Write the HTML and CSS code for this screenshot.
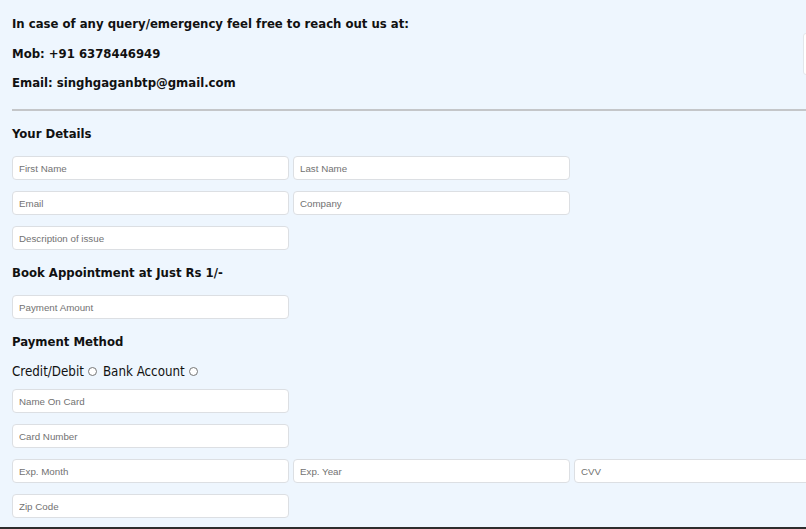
FILE: index.html
```html
<!DOCTYPE html>
<html lang="en">
<head>
<meta charset="utf-8">
<title>Contact &amp; Appointment</title>
<link rel="stylesheet" href="styles.css">
</head>
<body>
<div class="page">
  <header class="contact">
    <div class="contact-info">
      <p class="line">In case of any query/emergency feel free to reach out us at:</p>
      <p class="line">Mob: +91 6378446949</p>
      <p class="line">Email: singhgaganbtp@gmail.com</p>
    </div>
    <div class="side-box"></div>
  </header>
  <hr class="divider">
  <form class="form">
    <h3 class="heading">Your Details</h3>
    <div class="row">
      <input class="field" type="text" placeholder="First Name">
      <input class="field" type="text" placeholder="Last Name">
    </div>
    <div class="row">
      <input class="field" type="text" placeholder="Email">
      <input class="field" type="text" placeholder="Company">
    </div>
    <div class="row">
      <input class="field" type="text" placeholder="Description of issue">
    </div>
    <h3 class="heading">Book Appointment at Just Rs 1/-</h3>
    <div class="row">
      <input class="field" type="text" placeholder="Payment Amount">
    </div>
    <h3 class="heading">Payment Method</h3>
    <div class="radios">
      <label class="radio-label">Credit/Debit <input class="radio" type="radio" name="pm"></label>
      <label class="radio-label">Bank Account <input class="radio" type="radio" name="pm"></label>
    </div>
    <div class="row">
      <input class="field" type="text" placeholder="Name On Card">
    </div>
    <div class="row">
      <input class="field" type="text" placeholder="Card Number">
    </div>
    <div class="row">
      <input class="field" type="text" placeholder="Exp. Month">
      <input class="field" type="text" placeholder="Exp. Year">
      <input class="field" type="text" placeholder="CVV">
    </div>
    <div class="row">
      <input class="field" type="text" placeholder="Zip Code">
    </div>
  </form>
  <footer class="footer"></footer>
</div>
</body>
</html>
```

FILE: styles.css
```css
html {
  overflow: hidden;
  background: #eef6fe;
}
body {
  margin: 0;
  background: #eef6fe;
  font-family: "DejaVu Sans Condensed", "DejaVu Sans", Verdana, sans-serif;
  font-stretch: condensed;
  color: #111;
}
.page {
  width: 900px;
  padding-left: 12px;
}
.contact {
  display: grid;
  grid-template-columns: 791px 1fr;
  padding-top: 15px;
}
.contact-info {
  display: flex;
  flex-direction: column;
  gap: 12.5px;
}
.line {
  margin: 0;
  font-size: 13px;
  font-weight: bold;
  line-height: 17px;
}
.side-box {
  margin-top: 18px;
  height: 40px;
  background: #fff;
  border: 1px solid #e3e6ea;
  border-radius: 3px;
}
.divider {
  margin: 18px 0 0 0;
  border: 0;
  border-top: 2px solid #c4c6c9;
  height: 0;
}
.form {
  display: flex;
  flex-direction: column;
  gap: 11px;
  margin-top: 11px;
}
.heading {
  margin: 0;
  font-size: 13px;
  font-weight: bold;
  line-height: 23px;
}
.row {
  display: flex;
  gap: 4px;
}
.field {
  box-sizing: border-box;
  width: 277px;
  height: 24px;
  margin: 0;
  padding: 0 6px;
  background: #fff;
  border: 1px solid #dcdfe3;
  border-radius: 4px;
  font-family: "Liberation Sans", Arial, sans-serif;
  font-stretch: normal;
  font-size: 9.75px;
  color: #333;
}
.field::placeholder {
  color: #727272;
}
.radios {
  display: flex;
  gap: 6px;
  height: 14px;
  align-items: center;
  font-size: 13.25px;
}
.radio-label {
  display: flex;
  align-items: center;
  gap: 4px;
}
.radio {
  appearance: none;
  -webkit-appearance: none;
  box-sizing: border-box;
  width: 9px;
  height: 9px;
  margin: 0;
  border: 1px solid #767676;
  border-radius: 50%;
  background: #fff;
}
.footer {
  margin-top: 9px;
  margin-left: -12px;
  height: 20px;
  background: #2d2d2d;
}
```
